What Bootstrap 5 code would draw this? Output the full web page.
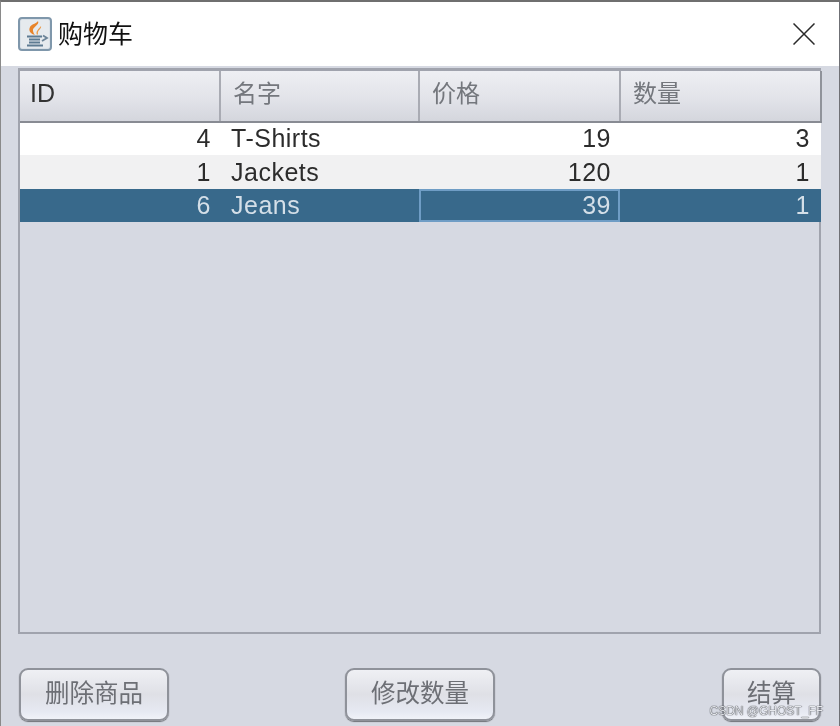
<!doctype html>
<html lang="zh">
<head>
<meta charset="utf-8">
<title>购物车</title>
<link href="https://cdn.jsdelivr.net/npm/bootstrap@5.3.0/dist/css/bootstrap.min.css" rel="stylesheet">
<style>
html,body{height:100%;margin:0;overflow:hidden}
body{background:#d6d9e2;font-family:"Liberation Sans","Noto Sans CJK SC",sans-serif}
.win{width:840px;height:726px;position:relative;border-top:2px solid #6f6f6f;border-left:1px solid #8a8a8a;border-right:1px solid #6f7075;background:#d6d9e2;filter:blur(.5px)}
.tbar{height:64px;background:#fff;padding:0 19px 0 17px}
.tname{font-size:25px;color:#111;margin-left:6px;line-height:1}
.closex{width:22px;height:22px;margin-right:5px}
.pane{height:566px;margin:2px 18px 0 17px;border:2px solid #a0a3ad;border-top-width:3px;background:#d6d9e2}
.grid{table-layout:fixed;width:801px;border-collapse:collapse;margin:0}
.grid col.c1{width:200px}
.grid col.c2{width:199px}
.grid col.c3{width:201px}
.grid col.c4{width:201px}
.grid th{height:51px;padding:0 0 5px 12px;font-weight:400;font-size:24px;color:#74777d;background:linear-gradient(#eeeff3,#e2e3e9 55%,#d4d6dd);border-right:2px solid #a9abb3;border-bottom:2px solid #888b93;line-height:1}
.grid th:first-child{color:#333;font-size:25px;padding-left:10px}
.grid th:last-child{border-right-color:#8f929a}
.grid td{padding:0 9px 0 0;font-size:25px;line-height:1;color:#2c2c2c;letter-spacing:.5px;border:0;white-space:nowrap}
.grid td.lft{padding:0 0 0 11px}
.grid td.rgt{text-align:right}
.grid td.endc{padding-right:11px}
.grid tr.rw1 td{background:#fff;height:33px;padding-bottom:2px}
.grid tr.rw2 td{background:#f1f1f2;height:34px}
.grid tr.rw3 td{background:#38698b;color:#d4dfe8;height:33px}
.grid tr.rw3 td.cur{outline:2px solid #6f9dc5;outline-offset:-2px}
.acts{padding:34px 18px 0 18px}
.jbtn{height:53px;padding:0;font-size:24.500px;line-height:1;color:#6d6f75;border:2px solid #8f929a;border-radius:9px;background:linear-gradient(#eff0f4,#dfe0e6 50%,#e6e9f2 85%,#f0f2f8);box-shadow:0 1px 1px #6f7278}
.w150{width:150px}
.w100{width:99px}
.midgap{margin-right:51px}
.wmark{position:absolute;right:16px;top:703px;font-size:12px;line-height:1;color:#e6e8ec;text-shadow:0 0 1px #2f3238,0 0 1px #2f3238}
</style>
</head>
<body>
<div class="win">
  <div class="tbar d-flex align-items-center">
    <svg width="34" height="34" viewBox="0 0 34 34" aria-hidden="true">
      <rect x="1" y="1" width="32" height="32" rx="3" fill="#d9e0e7" stroke="#7f97ab" stroke-width="2"/>
      <rect x="3" y="3" width="28" height="28" rx="1" fill="#e6eaee"/>
      <path d="M20 4c2 4-6 6-5 10 .3 1.500 1 3 2 4-4-1-7-4-5-8 1.500-3 6-3 8-6z" fill="#e8842a"/>
      <path d="M23 9c1 3-4 4-3 8l-1 1c-2-4 2-6 4-9z" fill="#eb9a48"/>
      <path d="M9 19.500h15M11 22.500h11M11 25.500h11M9 28.500h16" stroke="#5e7b92" stroke-width="1.800" fill="none"/>
      <path d="M25 18.500l4 2.500-5 3" stroke="#6d8498" stroke-width="1.800" fill="none"/>
    </svg>
    <span class="tname">购物车</span>
    <svg class="closex ms-auto" viewBox="0 0 22 22" aria-hidden="true"><path d="M.5.5l21 21M21.500.5l-21 21" stroke="#2a2a2a" stroke-width="1.500" fill="none"/></svg>
  </div>
  <div class="pane">
    <table class="grid">
      <colgroup><col class="c1"><col class="c2"><col class="c3"><col class="c4"></colgroup>
      <thead><tr><th>ID</th><th>名字</th><th>价格</th><th>数量</th></tr></thead>
      <tbody>
        <tr class="rw1"><td class="rgt">4</td><td class="lft">T-Shirts</td><td class="rgt">19</td><td class="rgt endc">3</td></tr>
        <tr class="rw2"><td class="rgt">1</td><td class="lft">Jackets</td><td class="rgt">120</td><td class="rgt endc">1</td></tr>
        <tr class="rw3"><td class="rgt">6</td><td class="lft">Jeans</td><td class="rgt cur">39</td><td class="rgt endc">1</td></tr>
      </tbody>
    </table>
  </div>
  <div class="acts d-flex justify-content-between">
    <button type="button" class="btn jbtn w150">删除商品</button>
    <button type="button" class="btn jbtn w150 midgap">修改数量</button>
    <button type="button" class="btn jbtn w100">结算</button>
  </div>
  <div class="wmark">CSDN @GHOST_FF</div>
</div>
<script src="https://cdn.jsdelivr.net/npm/bootstrap@5.3.0/dist/js/bootstrap.bundle.min.js"></script>
</body>
</html>
